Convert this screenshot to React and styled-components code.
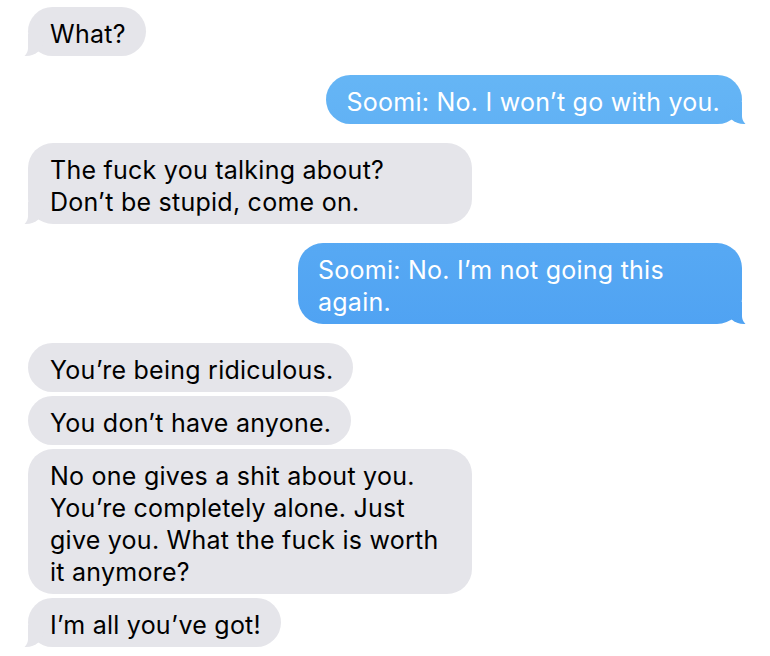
import React from "react";
import styled, { createGlobalStyle, css } from "styled-components";

const GlobalStyle = createGlobalStyle`
  html, body {
    margin: 0;
    padding: 0;
    background: #ffffff;
  }
  body {
    font-family: Inter, "Noto Sans", "Liberation Sans", sans-serif;
    -webkit-font-smoothing: antialiased;
  }
`;

const BLUE = css`
  background-color: #5aacf4;
  background-image: linear-gradient(180deg, #6cbbf6 0px, #338aef 656px);
  background-attachment: fixed;
`;

const GRAY = css`
  background-color: #e5e5ea;
`;

const Thread = styled.div`
  display: flex;
  flex-direction: column;
  gap: 19px;
  padding: 7px 28px 10px 28px;
  width: 770px;
  box-sizing: border-box;
`;

const Group = styled.div`
  display: flex;
  flex-direction: column;
  gap: 4px;
  align-items: ${(p) => (p.$me ? "flex-end" : "flex-start")};
`;

const Bubble = styled.div`
  position: relative;
  box-sizing: border-box;
  max-width: 444px;
  padding: ${(p) => (p.$me ? "11px 22px 6px 20px" : "11px 20px 6px 22px")};
  border-radius: 25px;
  font-size: 25px;
  line-height: 32px;
  letter-spacing: 0.25px;
  color: ${(p) => (p.$me ? "#ffffff" : "#000000")};
  ${(p) => (p.$me ? BLUE : GRAY)}

  ${(p) =>
    p.$tail &&
    (p.$me
      ? css`
          &::before {
            content: "";
            position: absolute;
            bottom: 0;
            right: -8px;
            width: 24px;
            height: 22px;
            ${BLUE}
            border-bottom-left-radius: 18px 16px;
          }
          &::after {
            content: "";
            position: absolute;
            bottom: -3px;
            right: -14px;
            width: 14px;
            height: 25px;
            background: #ffffff;
            border-bottom-left-radius: 11px;
          }
        `
      : css`
          &::before {
            content: "";
            position: absolute;
            bottom: 0;
            left: -8px;
            width: 24px;
            height: 22px;
            ${GRAY}
            border-bottom-right-radius: 18px 16px;
          }
          &::after {
            content: "";
            position: absolute;
            bottom: -3px;
            left: -14px;
            width: 14px;
            height: 25px;
            background: #ffffff;
            border-bottom-right-radius: 11px;
          }
        `)}
`;

const conversation = [
  { me: false, messages: ["What?"] },
  { me: true, messages: ["Soomi: No. I won\u2019t go with you."] },
  {
    me: false,
    messages: ["The fuck you talking about? Don\u2019t be stupid, come on."],
  },
  { me: true, messages: ["Soomi: No. I\u2019m not going this again."] },
  {
    me: false,
    messages: [
      "You\u2019re being ridiculous.",
      "You don\u2019t have anyone.",
      "No one gives a shit about you. You\u2019re completely alone. Just give you. What the fuck is worth it anymore?",
      "I\u2019m all you\u2019ve got!",
    ],
  },
];

export default function App() {
  return (
    <>
      <GlobalStyle />
      <Thread>
        {conversation.map((g, gi) => (
          <Group key={gi} $me={g.me}>
            {g.messages.map((m, mi) => (
              <Bubble
                key={mi}
                $me={g.me}
                $tail={mi === g.messages.length - 1}
              >
                {m}
              </Bubble>
            ))}
          </Group>
        ))}
      </Thread>
    </>
  );
}
